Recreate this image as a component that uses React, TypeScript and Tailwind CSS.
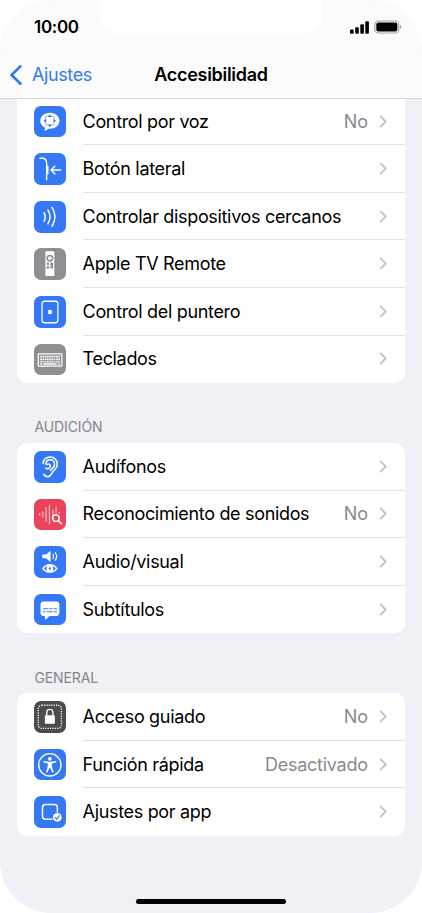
import type { ReactNode } from "react";

type Item = {
  label: string;
  value?: string;
  bg: string;
  icon: ReactNode;
};

const blue = "bg-[#3478f6]";
const gray = "bg-[#8e8e93]";

const voiceControl = (
  <>
    <path
      fill="#fff"
      d="M16 6.800c5.400 0 9.700 3.600 9.700 8.100s-4.300 8.100-9.700 8.100c-.5 0-1 0-1.400-.1-1.200 1-2.700 1.700-4.500 1.900.8-.8 1.200-1.800 1.200-2.900-3-1.300-5-4-5-7 0-4.500 4.300-8.100 9.700-8.100Z"
    />
    <path
      fill="#3478f6"
      d="m16 8.700 2.600 2.500h-5.200ZM16 21.100l2.600-2.500h-5.200ZM9.800 14.900l2.500-2.600v5.200ZM22.200 14.900l-2.500-2.600v5.200Z"
    />
    <g fill="none" stroke="#3478f6" strokeWidth=".8">
      <path d="M11.300 12.300c.4-1 1.100-1.700 2.100-2.100M20.700 12.300c-.4-1-1.100-1.700-2.100-2.100M11.300 17.500c.4 1 1.100 1.700 2.100 2.100M20.700 17.500c-.4 1-1.100 1.700-2.100 2.100" />
    </g>
  </>
);

const sideButton = (
  <g fill="none" stroke="#fff" strokeWidth="1.300" strokeLinecap="round" strokeLinejoin="round">
    <path d="M6 5.300h2.200c2.800 0 4.600 2 4.600 5.200v16.400" />
    <path d="M13.900 13.200v7.800" strokeWidth="1.400" />
    <path d="M27 17.100H17.500M21 13.300l-3.800 3.800 3.800 3.800" strokeWidth="1.500" />
  </g>
);

const nearby = (
  <g fill="none" stroke="#fff" strokeWidth="1.500" strokeLinecap="round">
    <path d="M10.100 11.800c1.500 2.600 1.500 5.900 0 8.500" />
    <path d="M14 9c2.700 4.300 2.700 9.700 0 14" />
    <path d="M18.200 6.500c3.700 6 3.700 13 0 19" />
  </g>
);

const remote = (
  <>
    <rect x="11.500" y="3.400" width="9" height="25" rx="1" fill="#fff" />
    <circle cx="16" cy="10.300" r="2.700" fill="none" stroke="#8e8e93" strokeWidth="1.600" />
    <g fill="#8e8e93">
      <circle cx="14.100" cy="16" r="1.400" />
      <circle cx="14.100" cy="19.500" r="1.400" />
      <circle cx="17.900" cy="16" r="1.400" />
      <rect x="16.700" y="15" width="2.600" height="6" rx="1.300" />
    </g>
  </>
);

const pointer = (
  <>
    <rect x="8.100" y="5.300" width="16" height="21.700" rx="2.400" fill="none" stroke="#fff" strokeWidth="1.300" />
    <circle cx="16.100" cy="16.200" r="2.200" fill="#fff" />
  </>
);

const keyboard = (
  <>
    <rect x="4.300" y="9.900" width="23.800" height="12.500" rx=".8" fill="none" stroke="#fff" strokeWidth="1.200" />
    <g stroke="#fff" fill="none">
      <path d="M6.300 12.800h19.800M6.300 15.500h19.800" strokeWidth="1.700" strokeDasharray="1.700 .56" />
      <path d="M6.300 18h19.800" strokeWidth="1.200" strokeDasharray="1.700 .56" />
      <path d="M6.300 20.100h1.700M9.300 20.100h13.600M24.400 20.100h1.700" strokeWidth="1.500" />
    </g>
  </>
);

const ear = (
  <g fill="none" stroke="#fff" strokeWidth="1.500" strokeLinecap="round" strokeLinejoin="round">
    <path d="M9.300 12.700C9.300 8.800 12.300 6 16.300 6c4.200 0 7.200 3 7.200 7 0 3.400-1.800 5.500-4 7.500-1.800 1.700-2 5.500-5.600 5.500-2 0-3.400-1.100-4.100-2.600" />
    <path d="M12 13.400c0-2.700 1.800-4.500 4.300-4.500s4.500 1.800 4.500 4.300c0 3.400-2.500 4.200-4 6.400" />
    <path d="M12 17.300c1.400 1.300 4.500.5 4.500-1.900 0-2-2-2.700-3.300-1.800" />
  </g>
);

const soundRecognition = (
  <>
    <g stroke="#fff" strokeOpacity=".65" strokeWidth="1.200" strokeLinecap="round">
      <path d="M5.800 14.700v1.700M8.900 13.200v5.200M12.200 8.900v13.900M15.600 6.600v18.400M19 11.200v9.600M22.300 8.700v5M25.600 13.400v1" />
    </g>
    <g fill="none" stroke="#fff" strokeWidth="1.600" strokeLinecap="round">
      <circle cx="22.100" cy="19.300" r="3.400" />
      <path d="m24.700 21.900 3 3" />
    </g>
  </>
);

const audioVisual = (
  <>
    <path fill="#fff" d="M9 8.700h3.200l3.500-3.200c.5-.4 1-.2 1 .4v9.200c0 .6-.5.8-1 .4l-3.500-3.200H9c-.4 0-.7-.3-.7-.7V9.400c0-.4.300-.7.700-.7Z" />
    <g fill="none" stroke="#fff" strokeWidth="1.200" strokeLinecap="round">
      <path d="M19.200 8.400c.9 1.300.9 3 0 4.300M21.500 6.800c1.700 2.300 1.700 5.200 0 7.500" />
      <path d="M9 22.700c1.700-2.300 4.200-3.800 7-3.800s5.300 1.500 7 3.800c-1.700 2.300-4.200 3.700-7 3.700s-5.300-1.400-7-3.700Z" strokeWidth="1.400" />
      <circle cx="16" cy="22.600" r="2.300" strokeWidth="2.200" />
    </g>
  </>
);

const subtitles = (
  <>
    <path fill="#fff" d="M9.500 7.500h13.200c1.800 0 2.900 1.100 2.900 2.900v8.800c0 1.800-1.100 2.900-2.900 2.900h-6.900L12 25.600c-.5.500-1 .3-1-.4v-3.100H9.500c-1.800 0-2.900-1.100-2.900-2.900v-8.800c0-1.800 1.100-2.900 2.900-2.900Z" />
    <g stroke="#3478f6" strokeWidth="1.200">
      <path d="M9 14.900h5.500M15.500 14.900h3.200M19.700 14.900h3.500M9 17.900h2.600M12.700 17.900h6M19.700 17.900h3.500" />
    </g>
  </>
);

const guidedAccess = (
  <>
    <rect x="4.300" y="4.300" width="23.400" height="23.400" rx="3.500" fill="none" stroke="#fff" strokeWidth="1.300" strokeDasharray="1.200 1.200" />
    <rect x="11" y="14.300" width="10" height="8.800" rx="1.200" fill="#fff" />
    <path d="M12.900 15v-3.200c0-2 1.300-3.300 3.100-3.300s3.100 1.300 3.100 3.300V15" fill="none" stroke="#fff" strokeWidth="1.400" />
  </>
);

const shortcut = (
  <>
    <circle cx="16" cy="16" r="11.300" fill="none" stroke="#fff" strokeWidth="1.400" />
    <circle cx="16" cy="9.900" r="1.900" fill="#fff" />
    <path
      fill="#fff"
      d="M10.200 12.200c1.900.5 3.800.7 5.800.7s3.900-.2 5.800-.7c.9-.2 1.200 1.100.3 1.400l-4 1c-.2 2.200.3 4.700 1.700 8.300.3.900-.9 1.400-1.300.5L16.200 19h-.4l-2.300 4.400c-.4.900-1.600.4-1.300-.5 1.400-3.600 1.900-6.100 1.700-8.300l-4-1c-.9-.3-.6-1.600.3-1.400Z"
    />
  </>
);

const perApp = (
  <>
    <rect x="8.600" y="8.500" width="15" height="15" rx="3" fill="none" stroke="#fff" strokeWidth="1.500" />
    <circle cx="23.500" cy="21.600" r="5.200" fill="#3478f6" />
    <circle cx="23.500" cy="21.600" r="4.400" fill="#fff" />
    <path d="m21.400 21.800 1.500 1.700 2.800-3.700" fill="none" stroke="#3478f6" strokeWidth="1.200" strokeLinecap="round" />
  </>
);

const physical: Item[] = [
  { label: "Control por voz", value: "No", bg: blue, icon: voiceControl },
  { label: "Botón lateral", bg: blue, icon: sideButton },
  { label: "Controlar dispositivos cercanos", bg: blue, icon: nearby },
  { label: "Apple TV Remote", bg: gray, icon: remote },
  { label: "Control del puntero", bg: blue, icon: pointer },
  { label: "Teclados", bg: gray, icon: keyboard },
];

const hearing: Item[] = [
  { label: "Audífonos", bg: blue, icon: ear },
  { label: "Reconocimiento de sonidos", value: "No", bg: "bg-[#eb445a]", icon: soundRecognition },
  { label: "Audio/visual", bg: blue, icon: audioVisual },
  { label: "Subtítulos", bg: blue, icon: subtitles },
];

const general: Item[] = [
  { label: "Acceso guiado", value: "No", bg: "bg-[#4c4c4c]", icon: guidedAccess },
  { label: "Función rápida", value: "Desactivado", bg: blue, icon: shortcut },
  { label: "Ajustes por app", bg: blue, icon: perApp },
];

const Row = ({ item, last }: { item: Item; last: boolean }) => (
  <li className="flex h-[47.6px] items-center pl-[17px]">
    <span className={`size-[31.7px] shrink-0 overflow-hidden rounded-[7px] ${item.bg}`}>
      <svg viewBox="0 0 32 32" className="size-full">
        {item.icon}
      </svg>
    </span>
    <div
      className={`ml-[16.5px] flex h-full flex-1 items-center border-b pr-[17.5px] text-[18px] tracking-[-0.33px] whitespace-nowrap ${
        last ? "border-transparent" : "border-[#e4e4e6]"
      }`}
    >
      <span className="flex-1 text-black">{item.label}</span>
      {item.value && <span className="tracking-[-0.25px] text-[#8a8a8e]">{item.value}</span>}
      <svg viewBox="0 0 9 14" className="ml-[11px] h-[13px] w-[8.4px]" fill="none" stroke="#c4c4c7" strokeWidth="2.100">
        <path d="m1.200 1 6 6-6 6" />
      </svg>
    </div>
  </li>
);

const List = ({ items, className = "rounded-[10px]" }: { items: Item[]; className?: string }) => (
  <ul className={`bg-white ${className}`}>
    {items.map((item, i) => (
      <Row key={item.label} item={item} last={i === items.length - 1} />
    ))}
  </ul>
);

const Heading = ({ children }: { children: ReactNode }) => (
  <h2 className="flex h-[59.8px] items-end pb-[5.600px] pl-[17px] text-[14px] leading-5 tracking-[-0.1px] text-[#85858a]">
    {children}
  </h2>
);

const StatusBar = () => (
  <div className="flex h-[54px] items-center justify-between pr-5 pl-[34px]">
    <span className="pt-px text-[17px] font-semibold tracking-[-0.3px] text-black">10:00</span>
    <div className="flex items-center gap-1">
      <svg viewBox="0 0 20 13" className="h-[13px] w-5">
        <rect x="0" y="8.600" width="3.600" height="4.200" rx="1" />
        <rect x="5.200" y="6.300" width="3.600" height="6.500" rx="1" />
        <rect x="10.300" y="3.300" width="3.600" height="9.500" rx="1" />
        <rect x="15.300" y=".3" width="3.600" height="12.500" rx="1" />
      </svg>
      <svg viewBox="0 0 28 14" className="h-3.5 w-7">
        <rect x=".8" y="1" width="24" height="12" rx="3.600" fill="none" stroke="#a3a3a3" strokeWidth="1.100" />
        <rect x="2.300" y="2.500" width="21" height="9" rx="2" />
        <path d="M26 5v4c.8-.3 1.300-1.100 1.300-2S26.800 5.300 26 5Z" fill="#a3a3a3" />
      </svg>
    </div>
  </div>
);

const Notch = () => (
  <svg viewBox="0 0 230 34" className="absolute top-0 left-24 z-20 h-[34px] w-[230px]" fill="#fff">
    <path d="M0 0c3 0 4 1 4 4v11c0 11 7 18.500 18 18.500h186c11 0 18-7.500 18-18.500V4c0-3 1-4 4-4Z" />
  </svg>
);

export default function App() {
  return (
    <div className="h-[913px] w-[422px] bg-white font-['Inter','Liberation_Sans',sans-serif]">
      <div className="relative flex h-full flex-col overflow-hidden rounded-[52px] bg-[#f1f0f6]">
        <header className="relative z-10 h-[99px] shrink-0 border-b border-[#d9d9db] bg-[#fbfbfb]">
          <StatusBar />
          <nav className="grid h-[41px] grid-cols-[1fr_auto_1fr] items-center text-[18px]">
            <a href="#" className="flex items-center pl-[10px] tracking-[-0.4px] text-[#3478f6]">
              <svg viewBox="0 0 12 20" className="mr-[10px] h-5 w-3" fill="none" stroke="#3478f6" strokeWidth="2.600" strokeLinecap="round" strokeLinejoin="round">
                <path d="M10.500 1.300 1.500 10l9 8.700" />
              </svg>
              Ajustes
            </a>
            <h1 className="font-semibold tracking-[-0.3px] text-black">Accesibilidad</h1>
          </nav>
        </header>
        <Notch />
        <main className="-mt-[1.3px] px-[17.4px]">
          <List items={physical} className="rounded-b-[10px]" />
          <Heading>AUDICIÓN</Heading>
          <List items={hearing} />
          <Heading>GENERAL</Heading>
          <List items={general} />
        </main>
        <div className="mt-auto mb-[9px] h-[5px] w-[150px] self-center rounded-full bg-black" />
      </div>
    </div>
  );
}
